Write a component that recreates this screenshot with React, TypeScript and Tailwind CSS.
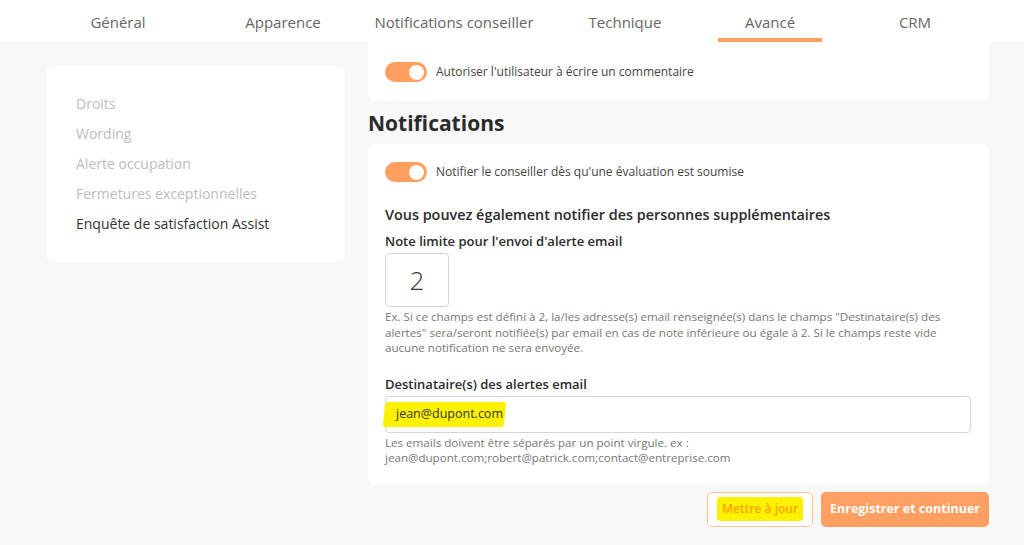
const tabs = [
  { label: "Général", w: "w-[164px]" },
  { label: "Apparence", w: "w-[166px]" },
  { label: "Notifications conseiller", w: "w-[176px]" },
  { label: "Technique", w: "w-[166px]" },
  { label: "Avancé", w: "w-[124px]", active: true },
  { label: "CRM", w: "w-[166px]" },
];

const menu = ["Droits", "Wording", "Alerte occupation", "Fermetures exceptionnelles", "Enquête de satisfaction Assist"];

const Toggle = ({ label }: { label: string }) => (
  <div className="flex items-center gap-[9px]">
    <div className="w-[42px] h-[20px] rounded-full bg-[#ff9f5f] flex items-center justify-end pr-[3px]">
      <div className="w-[15px] h-[15px] rounded-full bg-white" />
    </div>
    <span className="text-[12px] text-[#444]">{label}</span>
  </div>
);

const App = () => {
  return (
    <div className="w-[1024px] h-[545px] overflow-hidden bg-[#f8f8f8] font-['Open_Sans',sans-serif]">
      <header className="h-[42px] bg-white flex pl-[36px]">
        {tabs.map((t) => (
          <div key={t.label} className={`${t.w} h-full flex flex-col items-center justify-between`}>
            <span className="pt-[12px] text-[15px] leading-[20px] text-[#666]">{t.label}</span>
            {t.active ? <div className="w-[104px] h-[4px] bg-[#ffa062]" /> : <div />}
          </div>
        ))}
      </header>

      <main className="flex pl-[46px] pr-[35px] gap-[23px]">
        <aside className="w-[299px] mt-[24px] self-start bg-white rounded-[8px] px-[30px] pt-[28px] pb-[28px] flex flex-col gap-[10px]">
          {menu.map((m, i) => (
            <span key={m} className={`text-[14px] leading-[20px] ${i === menu.length - 1 ? "text-[#333]" : "text-[#bdbdbd]"}`}>
              {m}
            </span>
          ))}
        </aside>

        <section className="flex-1 flex flex-col">
          <div className="bg-white rounded-b-[8px] px-[17px] pt-[20px] pb-[19px]">
            <Toggle label="Autoriser l'utilisateur à écrire un commentaire" />
          </div>

          <h2 className="mt-[10px] text-[21px] leading-[24px] font-bold text-[#2b2b2b]">Notifications</h2>

          <div className="mt-[9px] bg-white rounded-[8px] px-[17px] pt-[18px] pb-[19px]">
            <Toggle label="Notifier le conseiller dès qu'une évaluation est soumise" />

            <h3 className="mt-[23px] text-[14.4px] leading-[20px] font-semibold text-[#2b2b2b]">
              Vous pouvez également notifier des personnes supplémentaires
            </h3>
            <p className="mt-[7px] text-[13px] leading-[18px] font-semibold text-[#2b2b2b]">Note limite pour l'envoi d'alerte email</p>
            <div className="mt-[3px] w-[64px] h-[54px] border border-[#d5d5d5] rounded-[4px] flex items-center justify-center text-[26px] font-light text-[#333]">
              2
            </div>
            <p className="mt-[2px] text-[11.6px] leading-[15.5px] text-[#777]">
              Ex. Si ce champs est défini à 2, la/les adresse(s) email renseignée(s) dans le champs "Destinataire(s) des
              <br />
              alertes" sera/seront notifiée(s) par email en cas de note inférieure ou égale à 2. Si le champs reste vide
              <br />
              aucune notification ne sera envoyée.
            </p>

            <p className="mt-[19px] text-[13px] leading-[18px] font-semibold text-[#2b2b2b]">Destinataire(s) des alertes email</p>
            <div className="mt-[3px] w-[586px] h-[37px] border border-[#d5d5d5] rounded-[4px] flex items-center">
              <span className="ml-[-2px] pl-[12px] pr-[2px] py-[3px] bg-[#fff200] rounded-[3px] -skew-x-6 text-[12.5px] text-[#333]">
                <span className="inline-block skew-x-6">jean@dupont.com</span>
              </span>
            </div>
            <p className="mt-[2px] text-[11.6px] leading-[15.5px] text-[#777]">
              Les emails doivent être séparés par un point virgule. ex :<br />
              jean@dupont.com;robert@patrick.com;contact@entreprise.com
            </p>
          </div>

          <div className="mt-[7px] flex justify-end gap-[8px]">
            <button className="h-[35px] w-[106px] border border-[#ffc29a] rounded-[5px] bg-white flex items-center justify-center">
              <span className="px-[5px] py-[3px] bg-[#fff200] rounded-[3px] text-[12px] font-semibold text-[#ffa000]">Mettre à jour</span>
            </button>
            <button className="h-[35px] w-[168px] rounded-[5px] bg-[#ffa062] text-white text-[12.5px] font-bold">
              Enregistrer et continuer
            </button>
          </div>
        </section>
      </main>
    </div>
  );
};

export default App;
